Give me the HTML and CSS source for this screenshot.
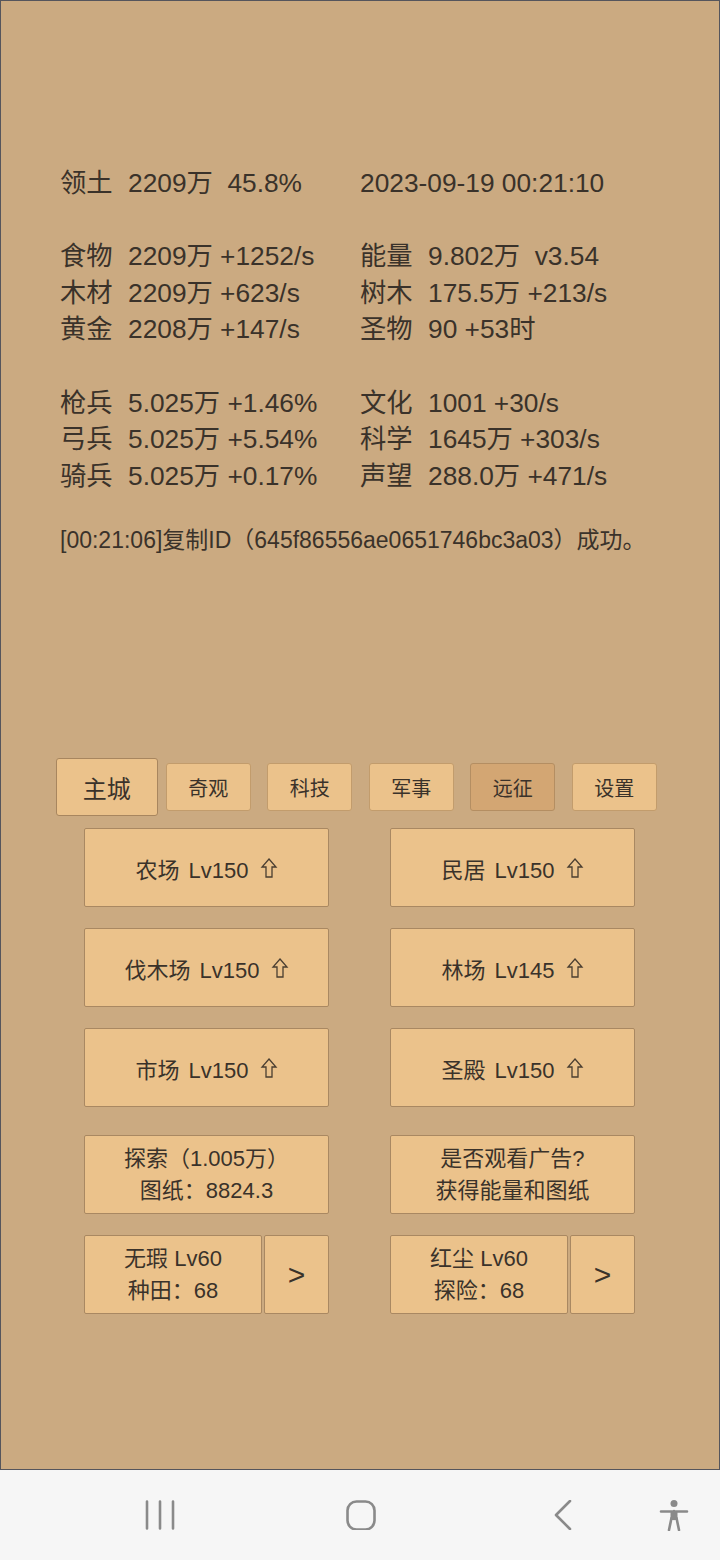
FILE: index.html
```html
<!DOCTYPE html>
<html>
<head>
	<meta charset="utf-8" />
	<title>主城</title>
	<link rel="stylesheet" href="styles.css">
</head>
<body>
<div class="game">
	<div class="stats">
		<div class="group">
			<div class="stat"><span class="label">领土</span>2209万  45.8%</div>
			<div class="stat">2023-09-19 00:21:10</div>
		</div>
		<div class="group">
			<div class="stat"><span class="label">食物</span>2209万 +1252/s</div>
			<div class="stat"><span class="label">能量</span>9.802万  v3.54</div>
			<div class="stat"><span class="label">木材</span>2209万 +623/s</div>
			<div class="stat"><span class="label">树木</span>175.5万 +213/s</div>
			<div class="stat"><span class="label">黄金</span>2208万 +147/s</div>
			<div class="stat"><span class="label">圣物</span>90 +53时</div>
		</div>
		<div class="group">
			<div class="stat"><span class="label">枪兵</span>5.025万 +1.46%</div>
			<div class="stat"><span class="label">文化</span>1001 +30/s</div>
			<div class="stat"><span class="label">弓兵</span>5.025万 +5.54%</div>
			<div class="stat"><span class="label">科学</span>1645万 +303/s</div>
			<div class="stat"><span class="label">骑兵</span>5.025万 +0.17%</div>
			<div class="stat"><span class="label">声望</span>288.0万 +471/s</div>
		</div>
	</div>

	<p class="log">[00:21:06]复制ID（645f86556ae0651746bc3a03）成功。</p>

	<div class="tabs">
		<div class="cell"><div class="tab current">主城</div></div>
		<div class="cell"><div class="tab">奇观</div></div>
		<div class="cell"><div class="tab">科技</div></div>
		<div class="cell"><div class="tab">军事</div></div>
		<div class="cell"><div class="tab pressed">远征</div></div>
		<div class="cell"><div class="tab">设置</div></div>
	</div>

	<div class="buttons">
		<div class="btn">农场 Lv150 <svg class="up" viewBox="0 0 16 20"><path d="M8 1 L15 9 H11 V19 H5 V9 H1 Z" /></svg></div>
		<div class="btn">民居 Lv150 <svg class="up" viewBox="0 0 16 20"><path d="M8 1 L15 9 H11 V19 H5 V9 H1 Z" /></svg></div>
		<div class="btn">伐木场 Lv150 <svg class="up" viewBox="0 0 16 20"><path d="M8 1 L15 9 H11 V19 H5 V9 H1 Z" /></svg></div>
		<div class="btn">林场 Lv145 <svg class="up" viewBox="0 0 16 20"><path d="M8 1 L15 9 H11 V19 H5 V9 H1 Z" /></svg></div>
		<div class="btn">市场 Lv150 <svg class="up" viewBox="0 0 16 20"><path d="M8 1 L15 9 H11 V19 H5 V9 H1 Z" /></svg></div>
		<div class="btn">圣殿 Lv150 <svg class="up" viewBox="0 0 16 20"><path d="M8 1 L15 9 H11 V19 H5 V9 H1 Z" /></svg></div>
		<div class="btn two spaced">探索（1.005万）<br />图纸：8824.3</div>
		<div class="btn two spaced">是否观看广告?<br />获得能量和图纸</div>
		<div class="split">
			<div class="btn two hero">无瑕 Lv60<br />种田：68</div>
			<div class="btn more">&gt;</div>
		</div>
		<div class="split">
			<div class="btn two hero">红尘 Lv60<br />探险：68</div>
			<div class="btn more">&gt;</div>
		</div>
	</div>
</div>

<div class="navbar">
	<svg class="nav recent" viewBox="0 0 30 30"><path d="M2 1.5 V28.5 M15 1.5 V28.5 M28 1.5 V28.5" /></svg>
	<svg class="nav home" viewBox="0 0 30 30"><rect x="1.5" y="1.5" width="27" height="28" rx="9" /></svg>
	<svg class="nav back" viewBox="0 0 30 30"><path d="M22 1 L8 15 L22 29" /></svg>
	<svg class="nav access" viewBox="0 0 30 32"><circle cx="15" cy="4.5" r="3.5" class="fill" /><path d="M2 12.5 H28 M15 12 V20 M12.5 19 L10 31 M17.5 19 L20 31" /><path d="M11.5 12 H18.5 V21 H11.5 Z" class="fill" /></svg>
</div>
</body>
</html>
```

FILE: styles.css
```css
body {
	margin: 0;
	width: 720px;
	font-family: "Liberation Sans", "Noto Sans CJK SC", sans-serif;
	color: #3a322a;
}
.game {
	box-sizing: border-box;
	width: 720px;
	height: 1470px;
	border: 1px solid #55555c;
	background-color: #cbaa81;
	padding: 164px 0 0 59px;
}
.group {
	display: grid;
	grid-template-columns: 300px 300px;
	font-size: 26.3px;
	line-height: 36.6px;
	margin-bottom: 36.6px;
}
.group:last-child {
	margin-bottom: 0;
}
.stat {
	white-space: pre;
}
.label {
	display: inline-block;
	width: 68px;
}
.log {
	margin: 31px 0 0 0;
	font-size: 23px;
	line-height: 30px;
	white-space: nowrap;
}
.tabs {
	display: grid;
	grid-template-columns: repeat(6, 101.5px);
	height: 58px;
	margin: 203px 0 0 -4px;
}
.cell {
	display: flex;
	align-items: center;
	justify-content: center;
}
.tab {
	box-sizing: border-box;
	width: 85px;
	height: 48px;
	display: flex;
	align-items: center;
	justify-content: center;
	background-color: #ebc28b;
	border: 1px solid #c29c6c;
	border-radius: 3px;
	font-size: 20px;
}
.tab.current {
	width: 102px;
	height: 58px;
	font-size: 24px;
	border-color: #a8865f;
}
.tab.pressed {
	background-color: #d3a673;
	border-color: #b48e62;
}
.buttons {
	display: grid;
	grid-template-columns: 245px 245px;
	grid-template-rows: 79px 79px 79px 86px 79px;
	column-gap: 61px;
	row-gap: 21px;
	margin: 12px 0 0 24px;
}
.btn {
	box-sizing: border-box;
	display: flex;
	align-items: center;
	justify-content: center;
	background-color: #ebc28b;
	border: 1px solid #a98862;
	border-radius: 2px;
	font-size: 22px;
	white-space: pre;
	word-spacing: 3px;
}
.btn.two {
	text-align: center;
	line-height: 32px;
	word-spacing: 0;
}
.btn.spaced {
	margin-top: 7px;
}
.up {
	width: 18px;
	height: 20px;
	margin-left: 2px;
}
.up path {
	fill: none;
	stroke: #4a3e31;
	stroke-width: 1.3;
	stroke-linejoin: miter;
}
.split {
	display: flex;
	gap: 2px;
}
.hero {
	flex: 1;
}
.more {
	width: 65px;
	font-size: 30px;
}
.navbar {
	height: 90px;
	background-color: #f6f6f6;
	display: flex;
	align-items: center;
}
.nav {
	width: 30px;
	height: 30px;
	fill: none;
	stroke: #8a8a8a;
	stroke-width: 2.6;
	stroke-linecap: round;
	stroke-linejoin: round;
}
.nav .fill {
	fill: #8a8a8a;
	stroke: none;
}
.recent {
	margin-left: 145px;
}
.home {
	margin-left: 171px;
}
.back {
	margin-left: 172px;
}
.access {
	margin-left: 81px;
	height: 32px;
}
```
